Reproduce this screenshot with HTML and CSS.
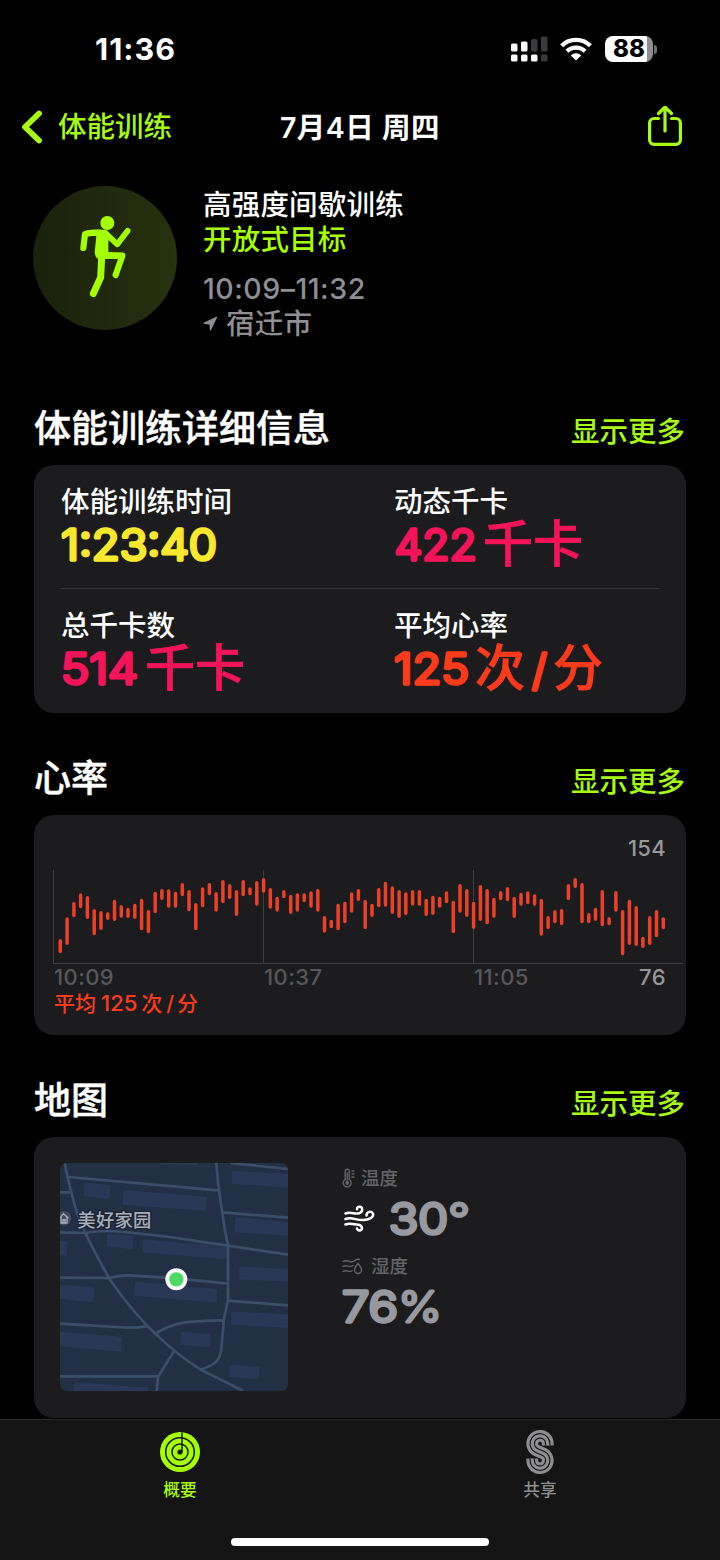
FILE: index.html
```html
<!DOCTYPE html>
<html lang="zh-CN">
<head>
  <meta charset="UTF-8">
  <meta name="viewport" content="width=device-width, initial-scale=1.0">
  <title>体能训练</title>
  <link rel="stylesheet" href="styles.css">
</head>
<body>
  <header class="status-bar">
    <span class="clock">11:36</span>
    <div class="status-icons">
      <svg class="signal" width="38" height="27" viewBox="0 0 38 27">
        <g fill="#fff">
          <rect x="1" y="7.5" width="6.5" height="8" rx="1.5"/>
          <rect x="11" y="5.5" width="6.5" height="10" rx="1.5"/>
          <rect x="1" y="18.5" width="6.5" height="7" rx="1.5"/>
          <rect x="11" y="18.5" width="6.5" height="7" rx="1.5"/>
          <rect x="21" y="18.5" width="6.5" height="7" rx="1.5"/>
        </g>
        <g fill="#3a3a3c">
          <rect x="21" y="3" width="6.5" height="12.5" rx="1.5"/>
          <rect x="31" y="0.5" width="6.5" height="15" rx="1.5"/>
          <rect x="31" y="18.5" width="6.5" height="7" rx="1.5"/>
        </g>
      </svg>
      <svg class="wifi" width="32" height="24" viewBox="0 0 32 24">
        <g fill="none" stroke="#fff" stroke-width="4.2">
          <path d="M1.6 8.8a20.6 20.6 0 0 1 28.8 0"/>
          <path d="M6.9 14.3a13 13 0 0 1 18.2 0"/>
        </g>
        <path fill="#fff" d="M16 23.6l-5.2-5.2a7.4 7.4 0 0 1 10.4 0z"/>
      </svg>
      <div class="battery"><span>88</span></div>
      <div class="battery-cap"></div>
    </div>
  </header>

  <nav class="nav-bar">
    <a class="back">
      <svg width="22" height="34" viewBox="0 0 22 34"><path d="M18 3.5L4 17l14 13.5" fill="none" stroke="currentColor" stroke-width="5.8" stroke-linecap="round" stroke-linejoin="round"/></svg>
      <span>体能训练</span>
    </a>
    <h1>7月4日 周四</h1>
    <svg class="share" width="34" height="42" viewBox="0 0 34 42">
      <g fill="none" stroke="currentColor" stroke-width="3.2" stroke-linecap="round" stroke-linejoin="round">
        <path d="M10.500 12.500H6a4.400 4.400 0 0 0-4.400 4.400V34A4.400 4.400 0 0 0 6 38.400h22a4.400 4.400 0 0 0 4.400-4.400V16.900a4.400 4.400 0 0 0-4.400-4.400h-4.500"/>
        <path d="M17 25V1.500M10.500 7.500L17 1l6.500 6.500"/>
      </g>
    </svg>
  </nav>

  <section class="workout">
    <div class="workout-icon">
      <svg width="56" height="84" viewBox="170 138 168 252">
        <circle cx="261" cy="159" r="21" fill="#a6ff00"/>
        <path d="M216 179H252Q263 180 268 192L264 215V246L312 249V266H250L232 266Q224 262 223 246L228 198H196V182Z" fill="#a6ff00"/>
        <g fill="none" stroke="#a6ff00" stroke-width="18.5" stroke-linecap="round" stroke-linejoin="round">
          <path d="M189 234L194 192Q215 188 238 188"/>
          <path d="M256 190L291 223L322 182" stroke-width="17"/>
          <path d="M242 257H306L286 315"/>
          <path d="M244 262L241 322L219 371" stroke-width="21"/>
        </g>
      </svg>
    </div>
    <div class="workout-info">
      <p class="name">高强度间歇训练</p>
      <p class="goal">开放式目标</p>
      <p class="time">10:09–11:32</p>
      <p class="place">
        <svg width="15" height="15" viewBox="0 0 15 15"><path d="M13.5 1.2L1 7.2l6.2 1 .2 5.800z" fill="currentColor" stroke="currentColor" stroke-width="1.2" stroke-linejoin="round"/></svg>
        宿迁市
      </p>
    </div>
  </section>

  <div class="section-head">
    <h2>体能训练详细信息</h2>
    <a>显示更多</a>
  </div>
  <section class="card details">
    <div class="row">
      <div class="metric">
        <p>体能训练时间</p>
        <svg class="value yellow" width="300" height="52"><text class="num" x="0" y="41" textLength="156" lengthAdjust="spacingAndGlyphs">1:23:40</text></svg>
      </div>
      <div class="metric">
        <p>动态千卡</p>
        <svg class="value pink" width="260" height="52"><text class="num" x="0.500" y="41" textLength="82" lengthAdjust="spacingAndGlyphs">422</text><text class="unit" x="89" y="43">千卡</text></svg>
      </div>
    </div>
    <div class="row">
      <div class="metric">
        <p>总千卡数</p>
        <svg class="value pink" width="300" height="52"><text class="num" x="0" y="41" textLength="77" lengthAdjust="spacingAndGlyphs">514</text><text class="unit" x="84" y="43">千卡</text></svg>
      </div>
      <div class="metric">
        <p>平均心率</p>
        <svg class="value red" width="260" height="52"><text class="num" x="0" y="41" textLength="75" lengthAdjust="spacingAndGlyphs">125</text><text class="unit" x="81" y="43">次</text><text class="num" x="138" y="42">/</text><text class="unit" x="159" y="43">分</text></svg>
      </div>
    </div>
  </section>

  <div class="section-head">
    <h2>心率</h2>
    <a>显示更多</a>
  </div>
  <section class="card heart">
    <p class="max">154</p>
    <svg class="chart" width="652" height="100" viewBox="0 0 652 100">
      <path d="M19.5 5V98.5M229.5 5V98.5M439.5 5V98.5M19 98.5H649" stroke="#3f3f42" fill="none"/>
      <path id="bars" stroke="#eb4129" stroke-width="3.5" stroke-linecap="round" fill="none"/>
    </svg>
    <div class="axis">
      <span>10:09</span>
      <span>10:37</span>
      <span>11:05</span>
      <span class="min">76</span>
    </div>
    <p class="avg">平均<span>125</span>次<i>/</i>分</p>
  </section>

  <div class="section-head">
    <h2>地图</h2>
    <a>显示更多</a>
  </div>
  <section class="card map-card">
    <svg class="map" width="228" height="228" viewBox="30 40 684 684">
      <rect x="30" y="40" width="684" height="684" fill="#213045"/>
      <g fill="#293955">
        <path d="M103 99L181 106L178 147L101 140Z"/>
        <path d="M221 121L470 141L467 183L218 165Z"/>
        <path d="M547 64L714 72V113L545 103Z"/>
        <path d="M556 203L714 217V258L553 248Z"/>
        <path d="M172 252L250 259L247 299L170 290Z"/>
        <path d="M279 269L530 292V329L277 308Z"/>
        <path d="M30 273L50 275V319L30 317Z"/>
        <path d="M568 350L714 358V396L567 389Z"/>
        <path d="M255 396L502 418L500 459L252 438Z"/>
        <path d="M30 404L132 414L130 458L30 448Z"/>
        <path d="M545 486L714 494V534L543 525Z"/>
        <path d="M30 546L215 561L213 606L30 590Z"/>
        <path d="M393 546L481 554L479 593L390 586Z"/>
        <path d="M541 646L628 652L626 689L538 682Z"/>
        <path d="M75 697L295 714V724H70Z"/>
      </g>
      <g fill="none" stroke="#3c4f69" stroke-width="8">
        <path d="M44 40Q55 100 78 180Q95 240 180 390Q250 490 316 552Q380 615 452 660L580 724"/>
        <path d="M56 82L504 122"/>
        <path d="M499 40Q503 110 515 175Q522 235 534 287Q534 370 534 452L521 512Q517 560 514 600Q508 630 495 640Q480 650 452 660"/>
        <path d="M515 188L714 204M540 40L714 58"/>
        <path d="M30 128L60 128M30 248L103 250Q160 240 220 247Q380 263 450 276L534 288L714 315"/>
        <path d="M30 384L178 385Q215 374 250 378L380 386L534 402"/>
        <path d="M534 453L714 467"/>
        <path d="M30 522L200 532Q250 537 290 530M316 552Q360 525 400 519T521 512"/>
        <path d="M30 680H324M371 606L324 682L320 724"/>
      </g>
      <path d="M330 40L444 43" stroke="#2c3c52" stroke-width="6"/>
      <circle cx="42" cy="206" r="24" fill="#3e4b60" stroke="#1d2838" stroke-width="3"/>
      <path d="M30 205L40 192L55 205M33 203V220H51V203M39 220V210H45V220" stroke="#a9aeb8" stroke-width="4" fill="none"/>
      <text class="map-label" x="82" y="232" textLength="222">美好家园</text>
      <circle cx="379" cy="389" r="33" fill="#fff"/>
      <circle cx="379" cy="389" r="21.5" fill="#4cd964"/>
    </svg>
    <div class="weather">
      <p class="weather-label">
        <svg width="13" height="20" viewBox="0 0 13 20">
          <g fill="none" stroke="currentColor" stroke-width="1.4" stroke-linecap="round">
            <path d="M3.200 11.500V3.300a2 2 0 0 1 4 0v8.200a4 4 0 1 1-4 0z"/>
            <path d="M5.200 5v9M10 3h2M10 6h2M10 9h2"/>
          </g>
          <circle cx="5.200" cy="15" r="2" fill="currentColor"/>
        </svg>
        温度
      </p>
      <div class="reading">
        <svg class="wind" width="31" height="27" viewBox="0 0 31 27">
          <g fill="none" stroke="#fff" stroke-width="2.5" stroke-linecap="round">
            <path d="M1.5 8.5C7 6 11 10 15.5 8.2C19.5 6.5 18.5 1.5 15.5 1.7Q13 1.9 13 4.2"/>
            <path d="M1.5 14C8 11.5 13 16 20 15C26 14.5 30 12 29 8.7C27.5 5.5 22.5 6.5 22.5 10.5"/>
            <path d="M1.5 19.5C6 17.5 10 19.5 14 19.7C19 20 19 25.5 15.5 25.5Q13.5 25.5 13 23.5"/>
          </g>
        </svg>
        <svg class="value gray" width="100" height="52"><text class="num" x="0" y="42" textLength="59" lengthAdjust="spacingAndGlyphs">30</text><text class="num symbol" x="59" y="42" textLength="22" lengthAdjust="spacingAndGlyphs">°</text></svg>
      </div>
      <p class="weather-label humidity">
        <svg width="21" height="18" viewBox="0 0 21 18">
          <g fill="none" stroke="currentColor" stroke-width="1.4" stroke-linecap="round">
            <path d="M1 4.500C6 1.500 8 7 12 4Q15 1.500 17.500 2.500"/>
            <path d="M1 9.500C5 7 7 11.500 11 8.500"/>
            <path d="M1 14.500C5 12 7 16 10 13.700"/>
            <path d="M16 6.500Q12.500 10.500 12.500 13a3.400 3.400 0 0 0 7 0Q19.500 10.500 16 6.500z"/>
          </g>
        </svg>
        湿度
      </p>
      <div class="reading">
        <svg class="value gray" width="120" height="52"><text class="num" x="0" y="42" textLength="56" lengthAdjust="spacingAndGlyphs">76</text><text class="num symbol" x="56" y="42" textLength="44" lengthAdjust="spacingAndGlyphs">%</text></svg>
      </div>
    </div>
  </section>

  <footer class="tab-bar">
    <a class="tab active">
      <svg width="44" height="46" viewBox="0 0 44 46">
        <circle cx="22" cy="23" r="20" fill="#a6ff00"/>
        <g fill="none" stroke="#151a10" stroke-width="1.5">
          <circle cx="22" cy="23" r="14.3"/>
          <circle cx="22" cy="23" r="8"/>
          <path d="M24 3.5V23"/>
        </g>
        <circle cx="22" cy="23" r="2.6" fill="#151a10"/>
      </svg>
      <span>概要</span>
    </a>
    <a class="tab">
      <svg width="28" height="46" viewBox="0 0 28 46">
        <g fill="none">
          <path d="M21.750 16.500V14.600A7.750 7.750 0 1 0 11 21.750L17 24.250A7.750 7.750 0 1 1 6.250 31.400V29.500" stroke="#8e8e90" stroke-width="11.8"/>
          <path d="M21.750 16.500V14.600A7.750 7.750 0 1 0 11 21.750L17 24.250A7.750 7.750 0 1 1 6.250 31.400V29.500" stroke="#141415" stroke-width="5.6"/>
          <path d="M21.750 16.500V14.600A7.750 7.750 0 1 0 11 21.750L17 24.250A7.750 7.750 0 1 1 6.250 31.400V29.500" stroke="#8e8e90" stroke-width="3.2"/>
        </g>
      </svg>
      <span>共享</span>
    </a>
    <div class="home-indicator"></div>
  </footer>

  <script>
    // [top, bottom] of every heart rate range, in thirds of a pixel
    const ranges = [
      [387,430],[322,405],[276,322],[250,295],[258,327],[297,376],[303,360],[307,330],[269,333],[285,323],
      [293,324],[281,327],[266,361],[300,370],[245,310],[237,270],[238,293],[245,293],[219,259],[240,304],
      [279,361],[232,292],[219,256],[246,305],[210,280],[222,267],[240,318],[210,259],[232,256],[213,287],
      [204,248],[234,296],[260,305],[240,265],[254,312],[250,305],[250,277],[244,293],[237,305],[318,368],
      [329,355],[281,361],[275,340],[247,308],[237,273],[269,358],[281,321],[234,292],[215,290],[229,312],
      [240,324],[247,315],[240,287],[240,287],[266,318],[257,315],[260,293],[244,280],[272,370],[222,308],
      [237,321],[275,357],[225,333],[237,343],[263,323],[243,271],[231,274],[260,324],[248,287],[244,283],
      [253,287],[266,377],[318,358],[300,340],[297,346],[222,271],[204,234],[219,340],[309,340],[293,333],
      [240,349],[321,346],[243,305],[300,436],[269,405],[288,408],[380,414],[318,405],[300,382],[322,358]
    ];
    const d = ranges.map(([top, bottom], i) => {
      const x = (26.3 + i * 6.775).toFixed(1);
      return `M${x} ${(top / 3 - 53.2).toFixed(1)}V${(bottom / 3 - 56.8).toFixed(1)}`;
    }).join('');
    document.getElementById('bars').setAttribute('d', d);
  </script>
</body>
</html>
```
FILE: styles.css
```css
* {
    box-sizing: border-box;
}
body {
    display: flex;
    flex-direction: column;
    width: 720px;
    height: 1560px;
    margin: 0;
    overflow: hidden;
    background: #000;
    color: #fff;
    font-family: Inter, "Noto Sans CJK SC", sans-serif;
    font-size: 28.5px;
    font-weight: 500;
}
h1, h2, p {
    margin: 0;
}
svg {
    display: block;
    flex: none;
}
.status-bar {
    display: flex;
    justify-content: space-between;
    align-items: center;
    height: 98px;
    padding: 0 63px 0 95px;
}
.clock {
    padding-bottom: 1px;
    font-size: 30.5px;
    font-weight: 700;
    letter-spacing: 1px;
}
.status-icons {
    display: flex;
    align-items: center;
}
.wifi {
    margin: 0 13px 0 12px;
}
.battery {
    width: 48px;
    height: 26px;
    border-radius: 8px;
    background: linear-gradient(90deg, #fff 42px, #8e8e90 42px);
    color: #000;
    font-size: 24px;
    font-weight: 800;
    line-height: 26px;
    text-align: center;
}
.battery-cap {
    width: 3px;
    height: 9px;
    margin-left: 1px;
    border-radius: 0 3px 3px 0;
    background: #6d6d70;
}
.nav-bar {
    display: grid;
    grid-template-columns: 1fr auto 1fr;
    align-items: center;
    height: 58px;
    padding: 0 21px;
}
.back {
    display: flex;
    align-items: center;
    gap: 15px;
    color: #a6fa14;
    line-height: 34px;
}
.nav-bar h1 {
    padding-top: 1px;
    font-size: 28.5px;
    font-weight: 600;
    letter-spacing: 0.5px;
    line-height: 40px;
}
.share {
    justify-self: end;
    margin-right: 17px;
    color: #a6fa14;
}
.workout {
    display: flex;
    gap: 26px;
    height: 235px;
    padding: 30px 33px 0;
}
.workout-icon {
    display: flex;
    align-items: center;
    justify-content: center;
    width: 144px;
    height: 144px;
    border-radius: 50%;
    background: linear-gradient(90deg, #1a200b, #27320f);
}
.workout-info {
    padding-top: 2px;
    letter-spacing: 0.2px;
    line-height: 34.5px;
}
.goal {
    color: #a6ff00;
}
.time, .place {
    color: #8e8e93;
}
.time {
    margin-top: 15px;
    letter-spacing: 0.5px;
}
.place {
    display: flex;
    align-items: center;
    gap: 8px;
}
.section-head {
    display: flex;
    justify-content: space-between;
    align-items: center;
    height: 74px;
    padding: 0 35px 0 34px;
}
.section-head h2 {
    padding-top: 1px;
    font-size: 37px;
    font-weight: 500;
    line-height: 44px;
    -webkit-text-stroke: 0.5px currentColor;
}
.section-head a {
    padding-top: 3px;
    color: #a6fa14;
}
.card {
    flex: none;
    margin: 0 34px 28px;
    border-radius: 20px;
    background: #1c1c1e;
}
.details {
    height: 248px;
    padding: 0 27px;
}
.row {
    display: grid;
    grid-template-columns: 333px 1fr;
    height: 123px;
    padding-top: 20px;
}
.row + .row {
    height: 125px;
    border-top: 1px solid #39393b;
}
.metric p {
    line-height: 34px;
}
.value {
    overflow: visible;
}
/* thin digits with a round stroke give the rounded numerals */
.num {
    font-size: 42.5px;
    font-weight: 300;
    fill: currentColor;
    stroke: currentColor;
    stroke-width: 3.6px;
    stroke-linejoin: round;
}
.symbol {
    stroke-width: 2.8px;
}
.unit {
    font-size: 50px;
    font-weight: 500;
    fill: currentColor;
    stroke: currentColor;
    stroke-width: 0.7px;
}
.yellow {
    color: #fbe82d;
}
.pink {
    color: #f5145a;
}
.red {
    color: #fc3a1c;
}
.gray {
    color: #98989f;
}
.heart {
    height: 220px;
    padding-top: 20px;
    font-size: 22px;
}
.max {
    height: 30px;
    padding-right: 20px;
    color: #98989b;
    letter-spacing: 0.3px;
    line-height: 27px;
    text-align: right;
}
.axis {
    display: grid;
    grid-template-columns: 210px 210px 1fr auto;
    padding: 0 20px 0 20px;
    color: #58585b;
    letter-spacing: 0.4px;
    line-height: 24px;
}
.axis .min {
    color: #98989b;
}
.avg {
    padding-left: 20px;
    color: #fc3a1c;
    font-size: 21px;
    line-height: 28px;
}
.avg span {
    margin: 0 4px 0 5px;
    font-size: 22px;
}
.avg i {
    margin: 0 3px 0 4px;
    font-style: normal;
}
.map-card {
    display: flex;
    gap: 54px;
    height: 281px;
    margin-bottom: 1px;
    padding: 26px;
}
.map {
    border-radius: 7px;
}
.map-label {
    font-size: 55px;
    fill: #a9aeb8;
    stroke: #1a2433;
    stroke-width: 8px;
    stroke-linejoin: round;
    paint-order: stroke;
}
.weather-label {
    display: flex;
    align-items: center;
    gap: 6px;
    height: 30px;
    color: #636366;
    font-size: 18.5px;
    line-height: 30px;
}
.humidity {
    gap: 8px;
}
.reading {
    display: flex;
    align-items: center;
    gap: 14px;
    height: 58px;
    padding-bottom: 8px;
}
.wind {
    margin-left: 2px;
}
.tab-bar {
    display: grid;
    grid-template-columns: 1fr 1fr;
    grid-template-rows: 1fr auto;
    flex: 1;
    border-top: 1px solid #29292a;
    background: #141415;
}
.tab {
    display: flex;
    flex-direction: column;
    align-items: center;
    padding-top: 9px;
    color: #8e8e90;
    font-size: 16.7px;
    line-height: 31px;
}
.active {
    color: #a6fa14;
}
.home-indicator {
    grid-column: 1 / 3;
    justify-self: center;
    width: 258px;
    height: 8px;
    margin-bottom: 14px;
    border-radius: 4px;
    background: #fff;
}
```
